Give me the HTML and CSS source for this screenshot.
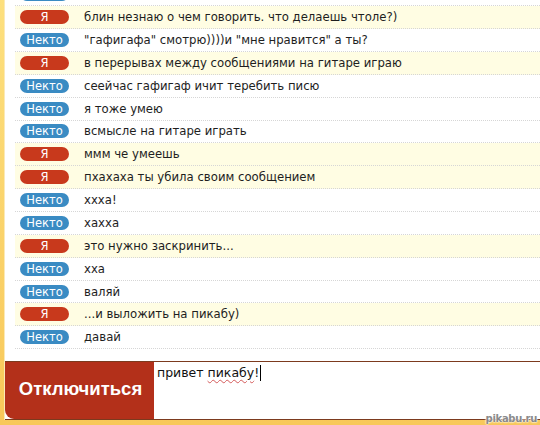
FILE: index.html
```html
<!DOCTYPE html>
<html lang="ru">
<head>
    <meta charset="UTF-8">
    <title>Чат</title>
    <link rel="stylesheet" href="styles.css">
</head>
<body>
    <div class="window">
        <div class="chat">
            <div class="log">
                <div class="msg stranger"><span class="who"></span><span class="text"></span></div>
                <div class="msg me"><span class="who">Я</span><span class="text">блин незнаю о чем говорить. что делаешь чтоле?)</span></div>
                <div class="msg stranger"><span class="who">Некто</span><span class="text">"гафигафа" смотрю))))и "мне нравится" а ты?</span></div>
                <div class="msg me"><span class="who">Я</span><span class="text">в перерывах между сообщениями на гитаре играю</span></div>
                <div class="msg stranger"><span class="who">Некто</span><span class="text">сеейчас гафигаф ичит теребить писю</span></div>
                <div class="msg stranger"><span class="who">Некто</span><span class="text">я тоже умею</span></div>
                <div class="msg stranger"><span class="who">Некто</span><span class="text">всмысле на гитаре играть</span></div>
                <div class="msg me"><span class="who">Я</span><span class="text">ммм че умеешь</span></div>
                <div class="msg me"><span class="who">Я</span><span class="text">пхахаха ты убила своим сообщением</span></div>
                <div class="msg stranger"><span class="who">Некто</span><span class="text">ххха!</span></div>
                <div class="msg stranger"><span class="who">Некто</span><span class="text">хахха</span></div>
                <div class="msg me"><span class="who">Я</span><span class="text">это нужно заскринить...</span></div>
                <div class="msg stranger"><span class="who">Некто</span><span class="text">хха</span></div>
                <div class="msg stranger"><span class="who">Некто</span><span class="text">валяй</span></div>
                <div class="msg me"><span class="who">Я</span><span class="text">...и выложить на пикабу)</span></div>
                <div class="msg stranger"><span class="who">Некто</span><span class="text">давай</span></div>
            </div>
        </div>
        <div class="controls">
            <button class="disconnect">Отключиться</button>
            <div class="input">привет <span class="typo">пикабу</span>!<span class="caret"></span></div>
        </div>
    </div>
    <div class="mark">pikabu.ru</div>
</body>
</html>
```

FILE: styles.css
```css
body { margin: 0; width: 540px; height: 425px; overflow: hidden; position: relative; background: linear-gradient(#fde07e, #f8c85a); font-family: "DejaVu Sans", Tahoma, sans-serif; }
.window { margin-left: 4px; height: 420px; background: #fff; border-left: 1px solid #fbe9b6; display: flex; flex-direction: column; }
.chat { flex: 1; overflow: hidden; }
.log { margin-top: -16.6px; margin-left: 10px; }
.msg { height: 21.86px; display: flex; align-items: center; border-bottom: 1px dotted #d6d6d6; }
.msg.me { background: #fffde3; }
.who { width: 49px; height: 14px; margin-left: 5px; border-radius: 7px; color: #fff; font-size: 11.5px; line-height: 14px; text-align: center; flex: none; }
.me .who { background: #c8391c; }
.stranger .who { background: #3a8bc3; }
.text { margin-left: 15px; font-size: 11.7px; color: #1e1e1e; white-space: nowrap; }
.controls { height: 57px; border-top: 1px solid #7c3a1e; border-bottom: 1px solid #7c3a1e; display: flex; }
.disconnect { width: 149px; margin: 0; border: none; border-radius: 0 0 0 9px; background: #b3301a; color: #fff; font-family: "Liberation Sans", Arial, sans-serif; font-weight: bold; font-size: 18.5px; padding: 0 0 4px 2px; }
.input { flex: 1; padding: 3px 0 0 3px; font-family: "DejaVu Sans", Tahoma, sans-serif; font-size: 12.5px; color: #111; }
.typo { text-decoration: underline wavy #d45a5a; text-decoration-thickness: 1px; text-underline-offset: 2px; }
.caret { display: inline-block; width: 1px; height: 16px; background: #000; vertical-align: -4px; margin-left: 1px; }
.mark { position: absolute; right: 3px; bottom: 1px; font-family: "DejaVu Sans", sans-serif; font-weight: bold; font-size: 10px; letter-spacing: -0.3px; color: #8a8a8a; text-shadow: 0 0 2px #fff, 0 0 2px #fff, 0 0 1px #fff; }
```
